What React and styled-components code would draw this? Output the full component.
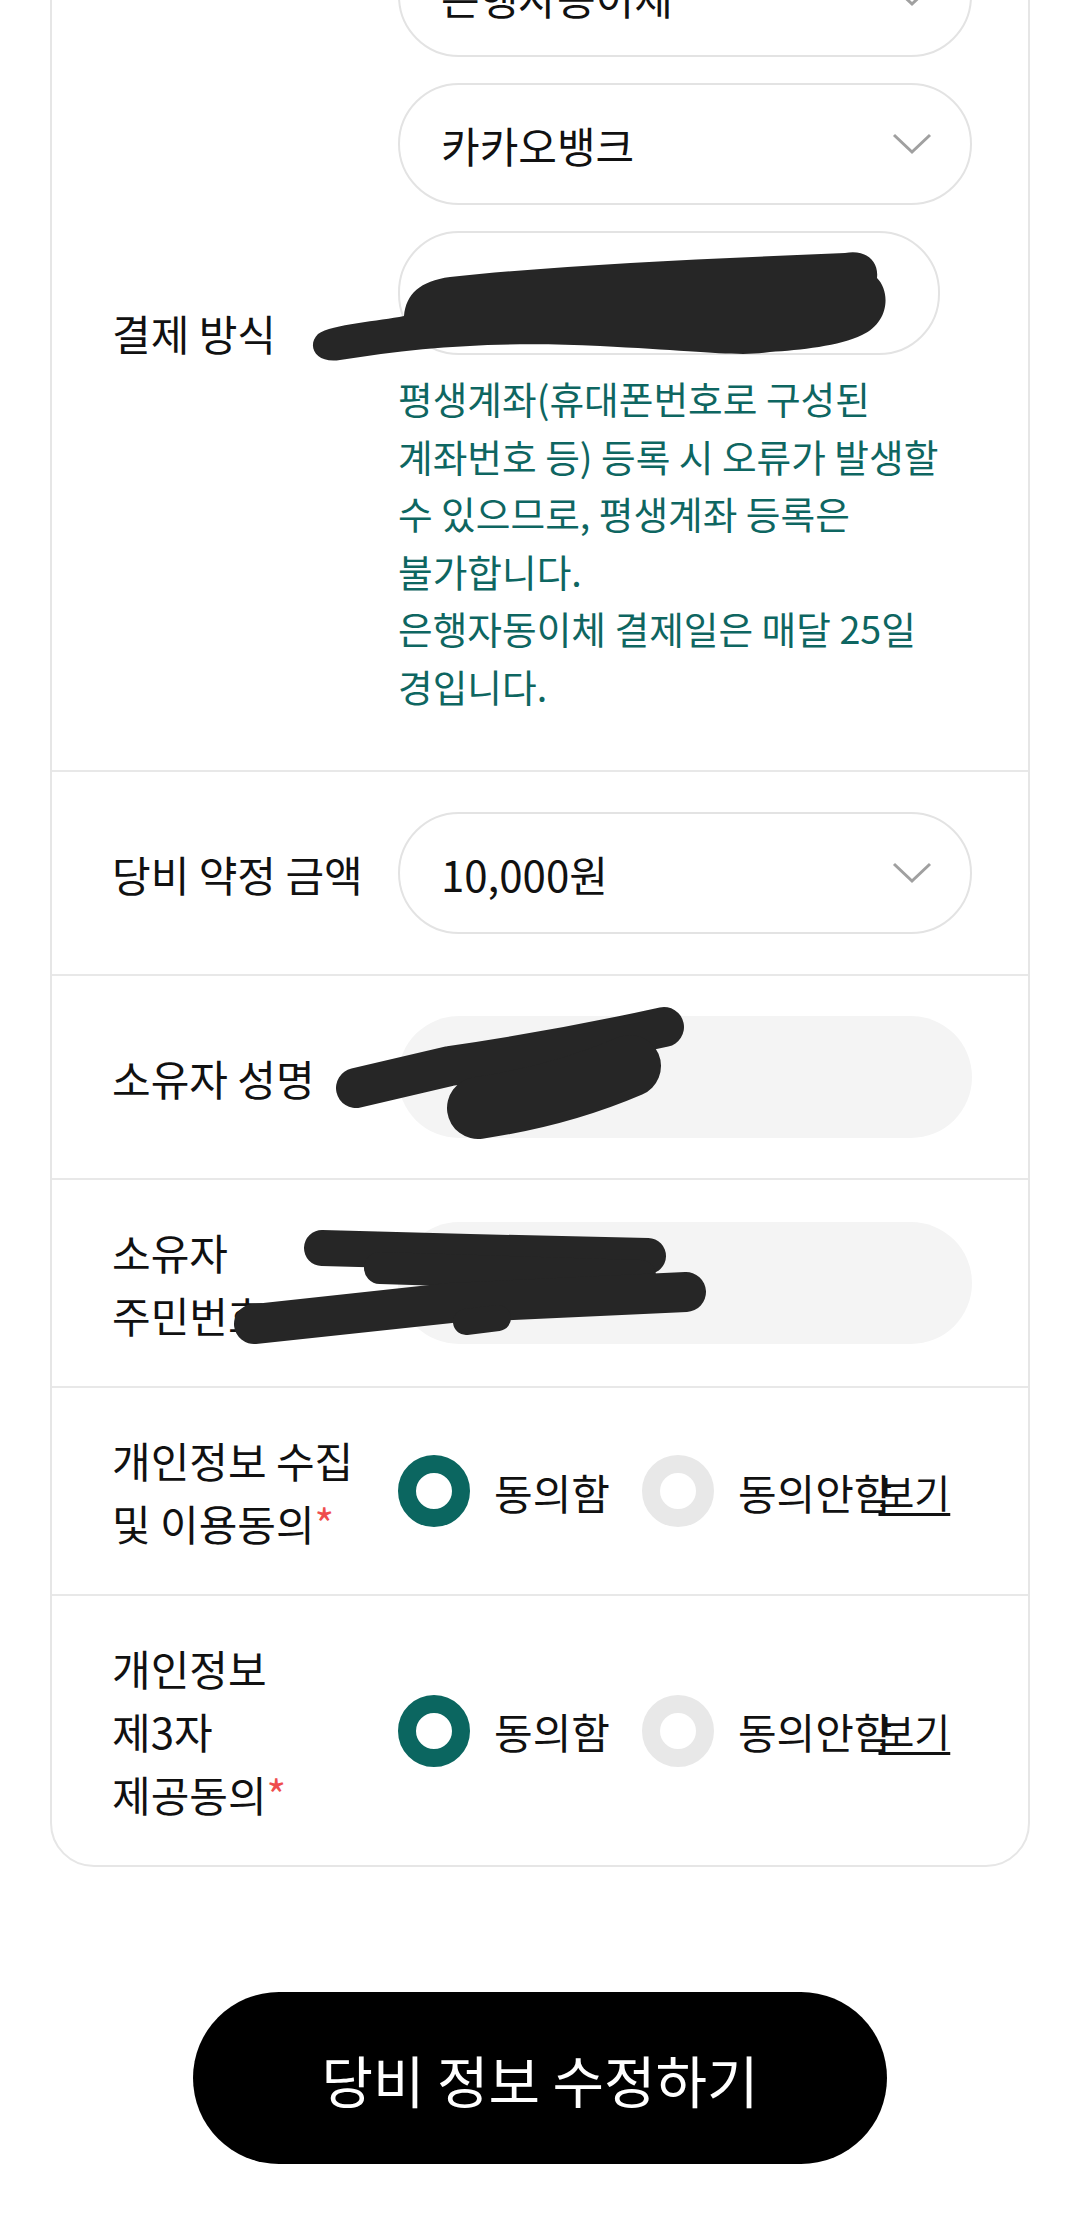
import React from "react";
import styled, { createGlobalStyle } from "styled-components";

const GlobalStyle = createGlobalStyle`
  html, body { margin: 0; padding: 0; background: #ffffff; }
  body {
    font-family: "Noto Sans CJK KR", "Noto Sans", sans-serif;
    color: #111111;
  }
  * { box-sizing: border-box; }
`;

const Screen = styled.div`
  position: relative;
  width: 1080px;
  height: 2220px;
  overflow: hidden;
  background: #ffffff;
`;

const Card = styled.section`
  margin: -107px 50px 0;
  border: 2px solid #e6e6e6;
  border-radius: 44px;
  background: #ffffff;
`;

const Row = styled.div`
  display: flex;
  align-items: center;
  padding: 40px 56px 40px 60px;
  & + & {
    border-top: 2px solid #e8e8e8;
  }
`;

const Label = styled.div`
  flex: 0 0 256px;
  margin-right: 30px;
  font-size: 42px;
  line-height: 63px;
  color: #111111;
  white-space: nowrap;
`;

const Required = styled.span`
  color: #ef4d4d;
`;

const Field = styled.div`
  flex: 1;
  min-width: 0;
  display: flex;
  flex-direction: column;
`;

const FieldStack = styled.div`
  display: flex;
  flex-direction: column;
  gap: 26px;
`;

const SelectBox = styled.div`
  height: 122px;
  border: 2px solid #e3e3e3;
  border-radius: 61px;
  background: #ffffff;
  display: flex;
  align-items: center;
  justify-content: space-between;
  padding: 0 38px 0 41px;
  font-size: 42px;
  color: #111111;
`;

const TextBox = styled.div`
  height: ${(p) => p.$height || 122}px;
  border-radius: 61px;
  background: ${(p) => (p.$filled ? "#f4f4f4" : "#ffffff")};
  border: ${(p) => (p.$filled ? "none" : "2px solid #e3e3e3")};
  margin-right: ${(p) => p.$inset || 0}px;
`;

const Helper = styled.p`
  margin: 14px 0 16px;
  font-size: 37.7px;
  line-height: 57.5px;
  color: #0e6661;
  white-space: nowrap;
`;

const RadioRow = styled.div`
  display: flex;
  align-items: center;
`;

const RadioOption = styled.label`
  display: flex;
  align-items: center;
  gap: 24px;
  font-size: 42px;
  line-height: 63px;
  color: #111111;
  white-space: nowrap;
  & + & {
    margin-left: 32px;
  }
`;

const RadioDot = styled.span`
  flex: none;
  width: 72px;
  height: 72px;
  border-radius: 50%;
  background: #ffffff;
  border: 18px solid ${(p) => (p.$checked ? "#0b6660" : "#e8e8e8")};
`;

const ViewLink = styled.a`
  margin-left: -14px;
  font-size: 39px;
  line-height: 63px;
  color: #111111;
  white-space: nowrap;
  text-decoration: underline;
  text-decoration-thickness: 3px;
  text-underline-offset: 5px;
`;

const SubmitButton = styled.button`
  display: flex;
  align-items: center;
  justify-content: center;
  margin: 125px auto 0;
  width: 694px;
  height: 172px;
  border: none;
  border-radius: 86px;
  background: #000000;
  color: #ffffff;
  font-family: inherit;
  font-size: 56px;
`;

const Redaction = styled.svg`
  position: absolute;
  top: 0;
  left: 0;
  pointer-events: none;
`;

const Chevron = () => (
  <svg width="40" height="22" viewBox="0 0 40 22">
    <polyline
      points="2,2 20,19 38,2"
      fill="none"
      stroke="#a0a0a0"
      strokeWidth="3"
    />
  </svg>
);

const Select = ({ children }) => (
  <SelectBox>
    <span>{children}</span>
    <Chevron />
  </SelectBox>
);

const ConsentRadios = () => (
  <RadioRow>
    <RadioOption>
      <RadioDot $checked />
      동의함
    </RadioOption>
    <RadioOption>
      <RadioDot />
      동의안함
    </RadioOption>
    <ViewLink>보기</ViewLink>
  </RadioRow>
);

export default function App() {
  return (
    <>
      <GlobalStyle />
      <Screen>
        <Card>
          <Row>
            <Label>결제 방식</Label>
            <Field>
              <FieldStack>
                <Select>은행자동이체</Select>
                <Select>카카오뱅크</Select>
                <TextBox $inset={32} $height={124} />
              </FieldStack>
              <Helper>
                평생계좌(휴대폰번호로 구성된
                <br />
                계좌번호 등) 등록 시 오류가 발생할
                <br />
                수 있으므로, 평생계좌 등록은
                <br />
                불가합니다.
                <br />
                은행자동이체 결제일은 매달 25일
                <br />
                경입니다.
              </Helper>
            </Field>
          </Row>
          <Row>
            <Label>당비 약정 금액</Label>
            <Field>
              <Select>10,000원</Select>
            </Field>
          </Row>
          <Row>
            <Label>소유자 성명</Label>
            <Field>
              <TextBox $filled />
            </Field>
          </Row>
          <Row>
            <Label>
              소유자
              <br />
              주민번호
            </Label>
            <Field>
              <TextBox $filled />
            </Field>
          </Row>
          <Row>
            <Label>
              개인정보 수집
              <br />및 이용동의<Required>*</Required>
            </Label>
            <Field>
              <ConsentRadios />
            </Field>
          </Row>
          <Row>
            <Label>
              개인정보
              <br />
              제3자
              <br />
              제공동의<Required>*</Required>
            </Label>
            <Field>
              <ConsentRadios />
            </Field>
          </Row>
        </Card>
        <SubmitButton>당비 정보 수정하기</SubmitButton>
        <Redaction width="1080" height="2220" viewBox="0 0 1080 2220">
          <path
            fill="#262626"
            d="M 318 334 C 332 324, 380 321, 404 316 C 406 294, 420 281, 450 277 C 560 265, 700 259, 845 253 C 866 249, 879 261, 877 278 C 891 292, 889 323, 862 335 C 840 346, 800 350, 770 352 C 740 357, 700 351, 600 346 C 500 341, 420 347, 340 360 C 316 364, 306 346, 318 334 Z"
          />
          <g
            fill="none"
            stroke="#262626"
            strokeLinecap="round"
            strokeLinejoin="round"
          >
            <path strokeWidth="40" d="M 356 1088 L 450 1066 Q 560 1050 664 1027" />
            <path strokeWidth="62" d="M 478 1108 Q 560 1096 630 1066" />
            <path strokeWidth="36" d="M 322 1248 L 470 1252 L 648 1256" />
            <path strokeWidth="32" d="M 380 1268 L 640 1276" />
            <path strokeWidth="40" d="M 254 1324 L 450 1303 L 686 1292" />
            <path strokeWidth="26" d="M 466 1322 L 498 1318" />
          </g>
        </Redaction>
      </Screen>
    </>
  );
}
